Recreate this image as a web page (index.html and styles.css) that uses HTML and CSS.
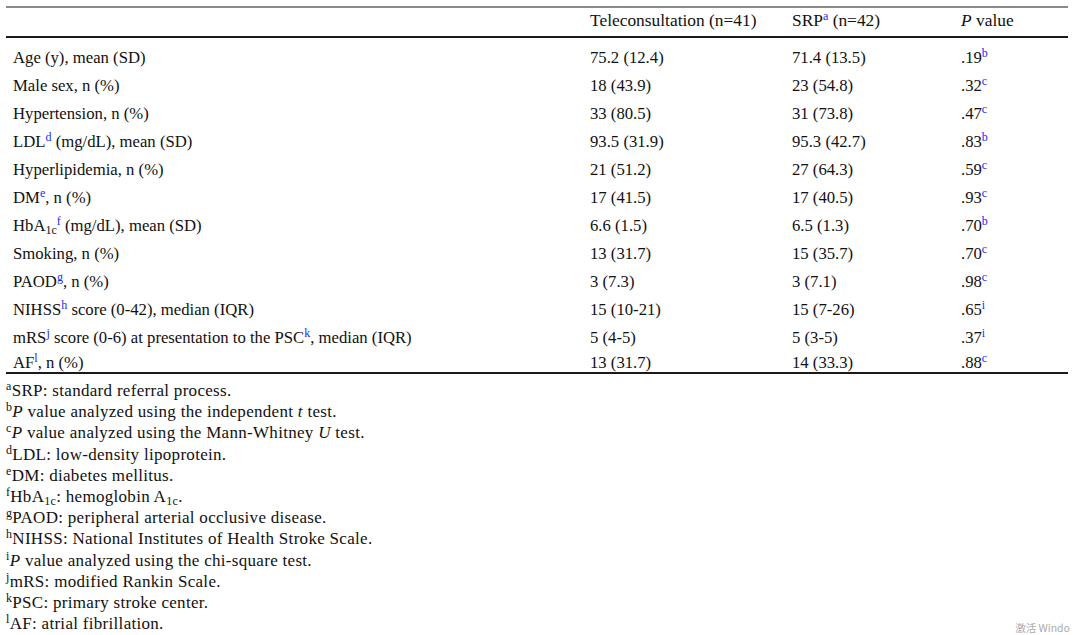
FILE: index.html
```html
<!DOCTYPE html>
<html lang="en">
<head>
<meta charset="utf-8">
<title>Baseline characteristics</title>
<link rel="stylesheet" href="styles.css">
</head>
<body>
<div class="page">
  <table class="data">
    <colgroup>
      <col class="c1"><col class="c2"><col class="c3"><col class="c4">
    </colgroup>
    <thead>
      <tr>
        <th></th>
        <th>Teleconsultation (n=41)</th>
        <th>SRP<sup class="ref">a</sup> (n=42)</th>
        <th><i>P</i> value</th>
      </tr>
    </thead>
    <tbody>
      <tr><td>Age (y), mean (SD)</td><td>75.2 (12.4)</td><td>71.4 (13.5)</td><td>.19<sup class="ref">b</sup></td></tr>
      <tr><td>Male sex, n (%)</td><td>18 (43.9)</td><td>23 (54.8)</td><td>.32<sup class="ref">c</sup></td></tr>
      <tr><td>Hypertension, n (%)</td><td>33 (80.5)</td><td>31 (73.8)</td><td>.47<sup class="ref">c</sup></td></tr>
      <tr><td>LDL<sup class="ref">d</sup> (mg/dL), mean (SD)</td><td>93.5 (31.9)</td><td>95.3 (42.7)</td><td>.83<sup class="ref">b</sup></td></tr>
      <tr><td>Hyperlipidemia, n (%)</td><td>21 (51.2)</td><td>27 (64.3)</td><td>.59<sup class="ref">c</sup></td></tr>
      <tr><td>DM<sup class="ref">e</sup>, n (%)</td><td>17 (41.5)</td><td>17 (40.5)</td><td>.93<sup class="ref">c</sup></td></tr>
      <tr><td>HbA<sub class="low">1c</sub><sup class="ref">f</sup> (mg/dL), mean (SD)</td><td>6.6 (1.5)</td><td>6.5 (1.3)</td><td>.70<sup class="ref">b</sup></td></tr>
      <tr><td>Smoking, n (%)</td><td>13 (31.7)</td><td>15 (35.7)</td><td>.70<sup class="ref">c</sup></td></tr>
      <tr><td>PAOD<sup class="ref">g</sup>, n (%)</td><td>3 (7.3)</td><td>3 (7.1)</td><td>.98<sup class="ref">c</sup></td></tr>
      <tr><td>NIHSS<sup class="ref">h</sup> score (0-42), median (IQR)</td><td>15 (10-21)</td><td>15 (7-26)</td><td>.65<sup class="ref">i</sup></td></tr>
      <tr><td>mRS<sup class="ref">j</sup> score (0-6) at presentation to the PSC<sup class="ref">k</sup>, median (IQR)</td><td>5 (4-5)</td><td>5 (3-5)</td><td>.37<sup class="ref">i</sup></td></tr>
      <tr class="last"><td>AF<sup class="ref">l</sup>, n (%)</td><td>13 (31.7)</td><td>14 (33.3)</td><td>.88<sup class="ref">c</sup></td></tr>
    </tbody>
  </table>
  <div class="notes">
    <p><sup>a</sup>SRP: standard referral process.</p>
    <p><sup>b</sup><i>P</i> value analyzed using the independent <i>t</i> test.</p>
    <p><sup>c</sup><i>P</i> value analyzed using the Mann-Whitney <i>U</i> test.</p>
    <p><sup>d</sup>LDL: low-density lipoprotein.</p>
    <p><sup>e</sup>DM: diabetes mellitus.</p>
    <p><sup>f</sup>HbA<sub>1c</sub>: hemoglobin A<sub>1c</sub>.</p>
    <p><sup>g</sup>PAOD: peripheral arterial occlusive disease.</p>
    <p><sup>h</sup>NIHSS: National Institutes of Health Stroke Scale.</p>
    <p><sup>i</sup><i>P</i> value analyzed using the chi-square test.</p>
    <p><sup>j</sup>mRS: modified Rankin Scale.</p>
    <p><sup>k</sup>PSC: primary stroke center.</p>
    <p><sup>l</sup>AF: atrial fibrillation.</p>
  </div>
  <div class="watermark">激活 Windo</div>
</div>
</body>
</html>
```
FILE: styles.css
```css
html, body {
  margin: 0;
  padding: 0;
  background: #ffffff;
}
body {
  font-family: "Liberation Serif", "Times New Roman", serif;
  color: #111111;
  width: 1080px;
  height: 635px;
  overflow: hidden;
}
.page {
  position: relative;
  width: 1080px;
  height: 635px;
  padding: 6px 0 0 6px;
  box-sizing: border-box;
}
.data {
  width: 1062px;
  border-collapse: collapse;
  table-layout: fixed;
  font-size: 16.7px;
}
.c1 { width: 577px; }
.c2 { width: 202px; }
.c3 { width: 169px; }
.c4 { width: 114px; }
.data thead tr {
  border-top: 2px solid #8a8a8a;
  border-bottom: 2px solid #1a1a1a;
}
.data th {
  font-weight: normal;
  font-size: 17.4px;
  text-align: left;
  line-height: 18px;
  height: 18px;
  padding: 3px 7px 7px 7px;
}
.data td {
  line-height: 17px;
  height: 17px;
  padding: 11px 7px 0 7px;
  white-space: nowrap;
}
.data tr.last td {
  padding-top: 7px;
  padding-bottom: 0;
  height: 19px;
}
.data tbody {
  border-bottom: 2px solid #1a1a1a;
}
sup, sub {
  font-size: 12px;
  line-height: 1;
  vertical-align: baseline;
  position: relative;
}
sup {
  top: -6px;
}
sub {
  top: 3px;
}
.ref {
  color: #1f1ff5;
}
.notes {
  margin-top: 6px;
  font-size: 17px;
  letter-spacing: 0.3px;
}
.notes p {
  margin: 0;
  line-height: 21.2px;
  height: 21.2px;
}
.watermark {
  position: absolute;
  right: 10px;
  bottom: 0px;
  font-family: "Noto Sans CJK SC", "Noto Sans", sans-serif;
  font-size: 10.5px;
  color: #ababab;
  line-height: 14px;
}
```
